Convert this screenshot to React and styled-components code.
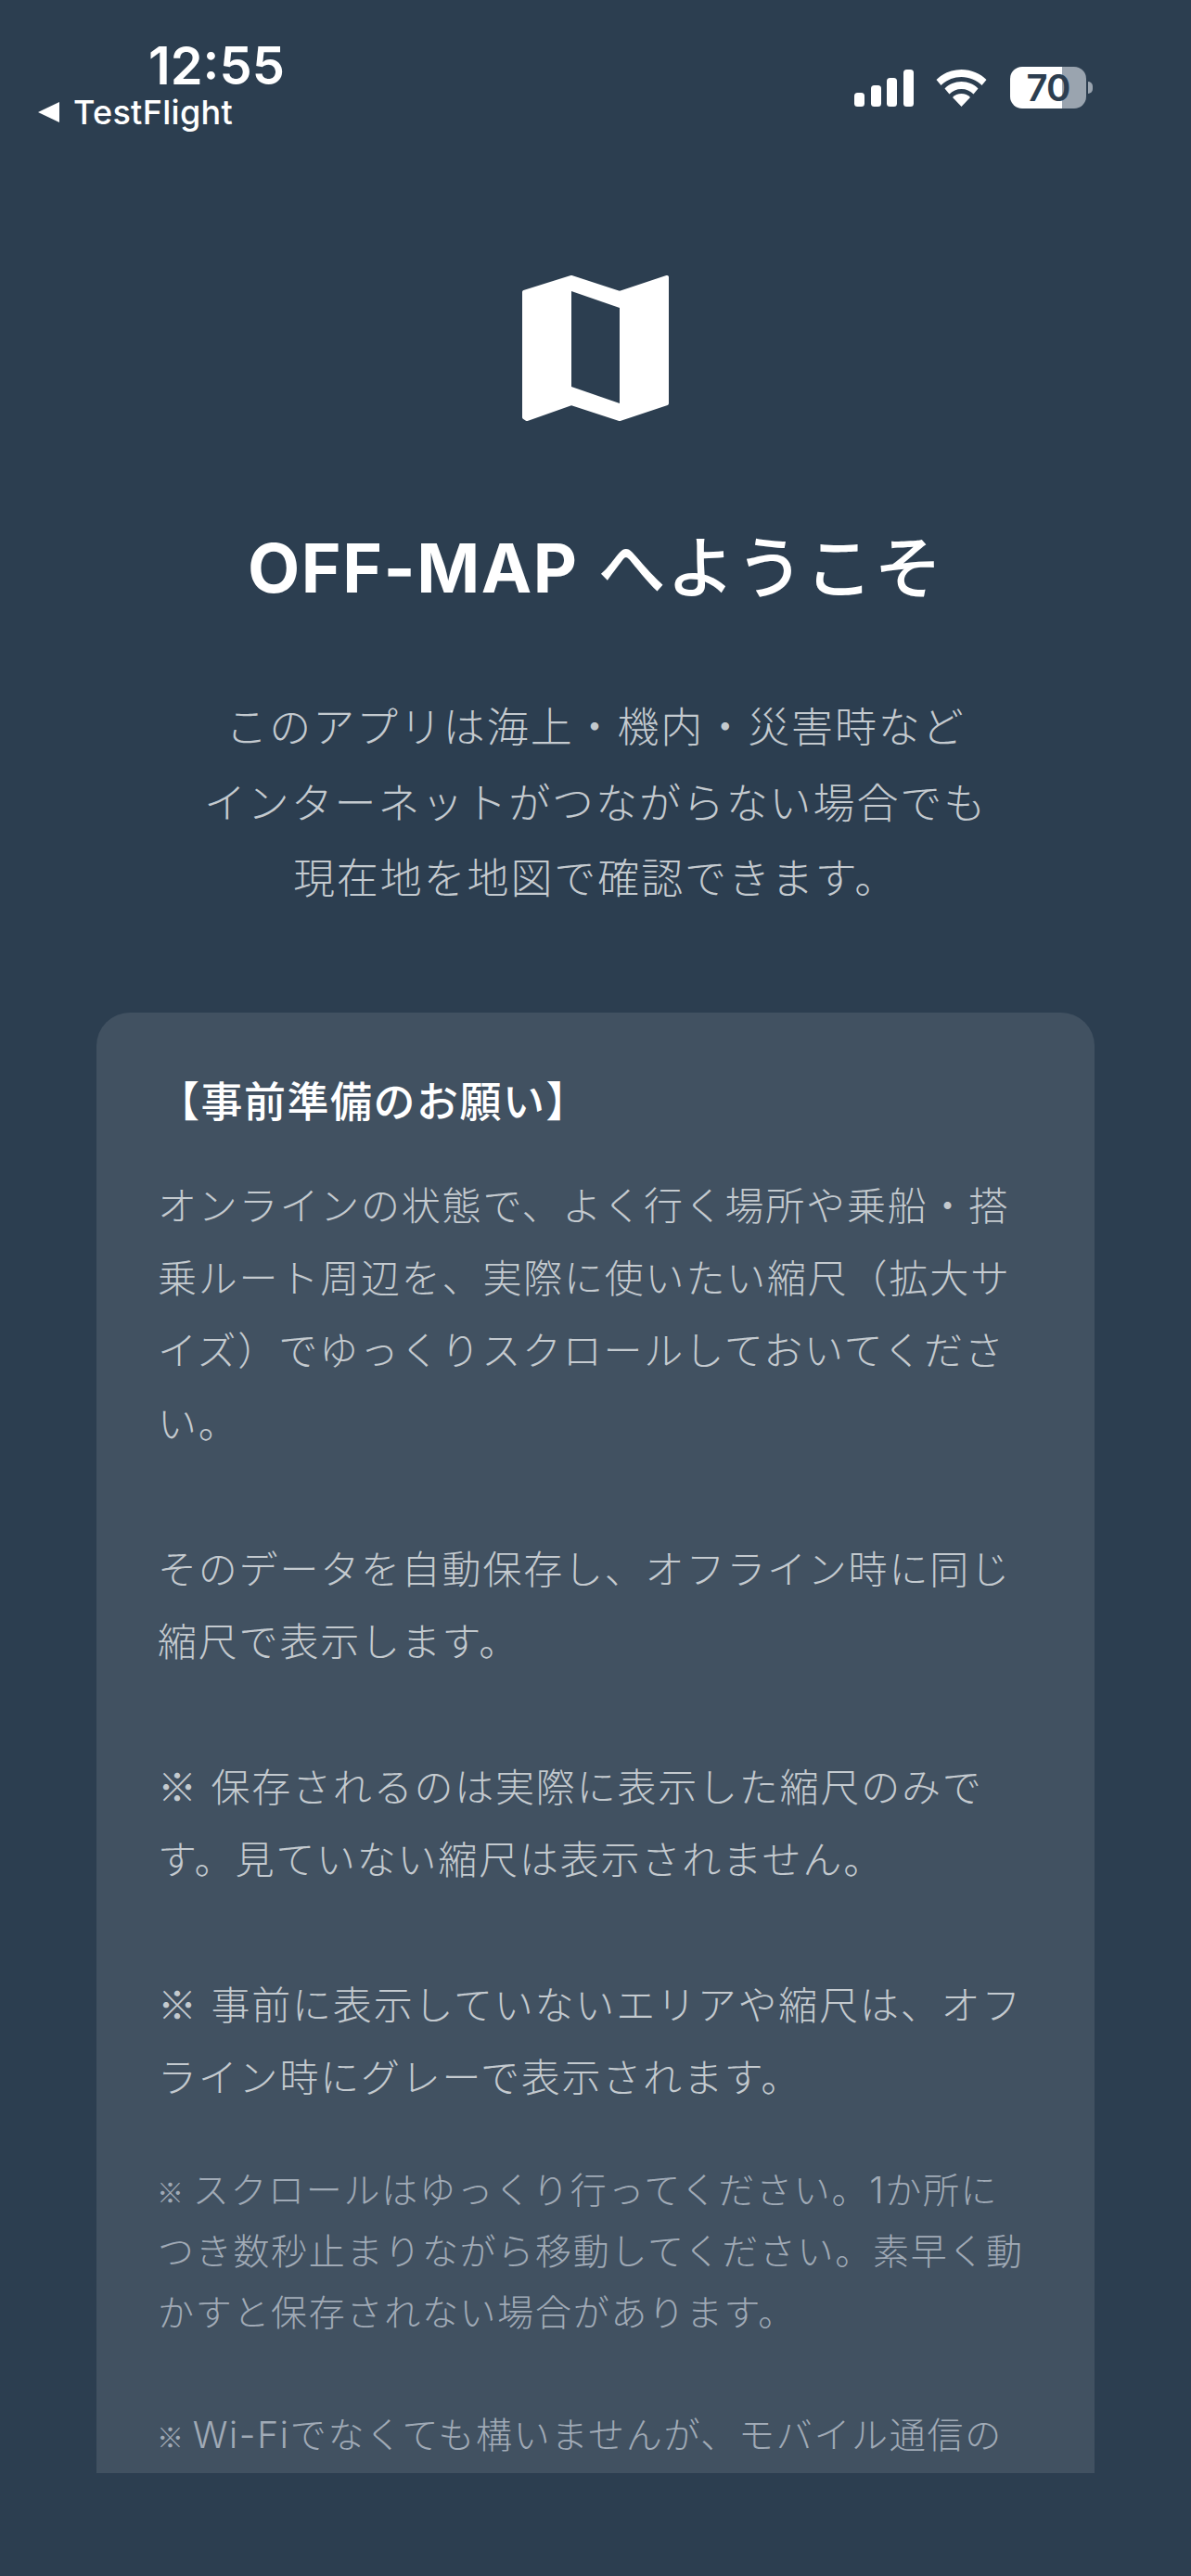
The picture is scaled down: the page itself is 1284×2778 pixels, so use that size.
import React from "react";
import styled, { createGlobalStyle } from "styled-components";

const Global = createGlobalStyle`
  html, body { margin: 0; padding: 0; background: #2c3e50; }
  body { font-family: Inter, "Noto Sans CJK JP", sans-serif; overflow: hidden; height: 2778px; }
  * { box-sizing: border-box; }
`;

const Page = styled.div`
  width: 1284px;
  height: 2778px;
  background: #2c3e50;
  overflow: hidden;
  display: flex;
  flex-direction: column;
  align-items: center;
`;

const StatusBar = styled.header`
  width: 100%;
  height: 150px;
  padding: 40px 113px 0 41px;
  display: flex;
  justify-content: space-between;
  color: #fff;
`;

const TimeBlock = styled.div`
  display: flex;
  flex-direction: column;
`;

const Clock = styled.div`
  font-size: 56px;
  line-height: 62px;
  font-weight: 600;
  margin-left: 119px;
`;

const BackLink = styled.div`
  display: flex;
  align-items: center;
  gap: 15px;
  font-size: 36px;
  line-height: 44px;
  font-weight: 500;
  letter-spacing: 0.3px;
  margin-top: -3px;
`;

const BackArrow = styled.span`
  width: 0;
  height: 0;
  border-top: 11px solid transparent;
  border-bottom: 11px solid transparent;
  border-right: 23px solid #fff;
`;

const StatusIcons = styled.div`
  display: flex;
  align-items: flex-start;
  padding-top: 32px;
`;

const Signal = styled.svg`
  width: 64px;
  height: 40px;
  margin-top: 3px;
  margin-right: 24px;
`;

const Wifi = styled.svg`
  width: 55px;
  height: 40px;
  margin-top: 3px;
  margin-right: 25px;
`;

const Battery = styled.div`
  width: 82px;
  height: 45px;
  border-radius: 13px;
  background: linear-gradient(to right, #fff 0 68%, #9aa4af 68% 100%);
  color: #2c3e50;
  font-size: 40px;
  line-height: 45px;
  font-weight: 600;
  letter-spacing: -1px;
  text-align: center;
  position: relative;
  &::after {
    content: "";
    position: absolute;
    right: -7px;
    top: 16px;
    width: 5px;
    height: 13px;
    border-radius: 0 5px 5px 0;
    background: #9aa4af;
  }
`;

const MapIcon = styled.svg`
  width: 160px;
  height: 160px;
  margin-top: 145px;
  flex: none;
`;

const Title = styled.h1`
  margin: 98px 0 0;
  font-size: 73px;
  line-height: 120px;
  font-weight: 500;
  color: #fff;
  letter-spacing: 1.5px;
`;

const TitleBrand = styled.span`
  font-weight: 700;
  letter-spacing: 1.5px;
`;

const Intro = styled.p`
  margin: 71px 0 0;
  font-size: 45px;
  line-height: 81.5px;
  letter-spacing: 1.9px;
  font-weight: 300;
  color: #c4cacf;
  text-align: center;
  white-space: pre-line;
`;

const Card = styled.section`
  width: 1076px;
  height: 1575px;
  margin-top: 103px;
  flex: none;
  padding: 63px 74px 0 66px;
  background: rgba(255, 255, 255, 0.1);
  border-radius: 36px 36px 0 0;
  overflow: hidden;
`;

const CardTitle = styled.h2`
  margin: 0;
  font-size: 45px;
  line-height: 68px;
  letter-spacing: 1.5px;
  font-weight: 500;
  color: #fff;
`;

const Body = styled.div`
  margin: 39px 0 0;
  font-size: 42px;
  line-height: 78.4px;
  letter-spacing: 1.8px;
  font-weight: 300;
  color: #c4cacf;
  white-space: pre-line;
`;

const BodyMark = styled.span`
  font-family: "Noto Sans CJK JP", sans-serif;
  line-height: 1;
`;

const Note = styled.div`
  margin: 48px 0 0;
  font-size: 39px;
  line-height: 66px;
  letter-spacing: 1.7px;
  font-weight: 300;
  color: #a0aab6;
  white-space: pre-line;
`;

const NoteMark = styled.span`
  font-family: "Noto Sans CJK JP", sans-serif;
  font-size: 29px;
  line-height: 1;
  font-weight: 400;
  letter-spacing: 0;
  margin: 0 -3px 0 -1px;
`;

export default function App() {
  return (
    <Page>
      <Global />
      <StatusBar>
        <TimeBlock>
          <Clock>12:55</Clock>
          <BackLink>
            <BackArrow />
            TestFlight
          </BackLink>
        </TimeBlock>
        <StatusIcons>
          <Signal viewBox="0 0 64 40">
            <rect x="0" y="25" width="11" height="15" rx="3.5" fill="#fff" />
            <rect x="18" y="17" width="11" height="23" rx="3.5" fill="#fff" />
            <rect x="35" y="9" width="11" height="31" rx="3.5" fill="#fff" />
            <rect x="53" y="0" width="11" height="40" rx="3.5" fill="#fff" />
          </Signal>
          <Wifi viewBox="0 0 55 40">
            <path d="M27.5 0C17 0 7.5 4 0.5 11l5 6C11 11.500 19 8 27.500 8s16.500 3.500 22 9l5-6C47.500 4 38 0 27.500 0z" fill="#fff" />
            <path d="M27.500 13c-7 0-13.500 2.800-18 7.500l5 6c3.300-3.500 8-5.500 13-5.500s9.700 2 13 5.500l5-6C41 15.800 34.500 13 27.500 13z" fill="#fff" />
            <path d="M27.500 26c-3.800 0-7.200 1.500-9.500 4l9.500 10 9.500-10c-2.300-2.500-5.700-4-9.500-4z" fill="#fff" />
          </Wifi>
          <Battery>70</Battery>
        </StatusIcons>
      </StatusBar>

      <MapIcon viewBox="0 0 160 160">
        <path
          fill="#fff"
          stroke="#fff"
          strokeWidth="4"
          strokeLinejoin="round"
          d="M3 20 L54 4 L106 21 L157 4 L157 140 L106 157 L54 140 L6 157 L3 155 Z"
        />
        <path fill="#2c3e50" d="M54 19 L106 37 L106 140 L54 122 Z" />
      </MapIcon>

      <Title>
        <TitleBrand>OFF-MAP</TitleBrand> へようこそ
      </Title>

      <Intro>{"このアプリは海上・機内・災害時など\nインターネットがつながらない場合でも\n現在地を地図で確認できます。"}</Intro>

      <Card>
        <CardTitle>【事前準備のお願い】</CardTitle>
        <Body>
          {"オンラインの状態で、よく行く場所や乗船・搭乗ルート周辺を、実際に使いたい縮尺（拡大サイズ）でゆっくりスクロールしておいてください。\n\nそのデータを自動保存し、オフライン時に同じ縮尺で表示します。\n\n"}
          <BodyMark>※</BodyMark>
          {" 保存されるのは実際に表示した縮尺のみです。見ていない縮尺は表示されません。\n\n"}
          <BodyMark>※</BodyMark>
          {" 事前に表示していないエリアや縮尺は、オフライン時にグレーで表示されます。"}
        </Body>
        <Note>
          <NoteMark>※</NoteMark>
          {" スクロールはゆっくり行ってください。1か所につき数秒止まりながら移動してください。素早く動かすと保存されない場合があります。\n\n"}
          <NoteMark>※</NoteMark>
          {" Wi-Fiでなくても構いませんが、モバイル通信の環境でご利用ください。"}
        </Note>
      </Card>
    </Page>
  );
}
